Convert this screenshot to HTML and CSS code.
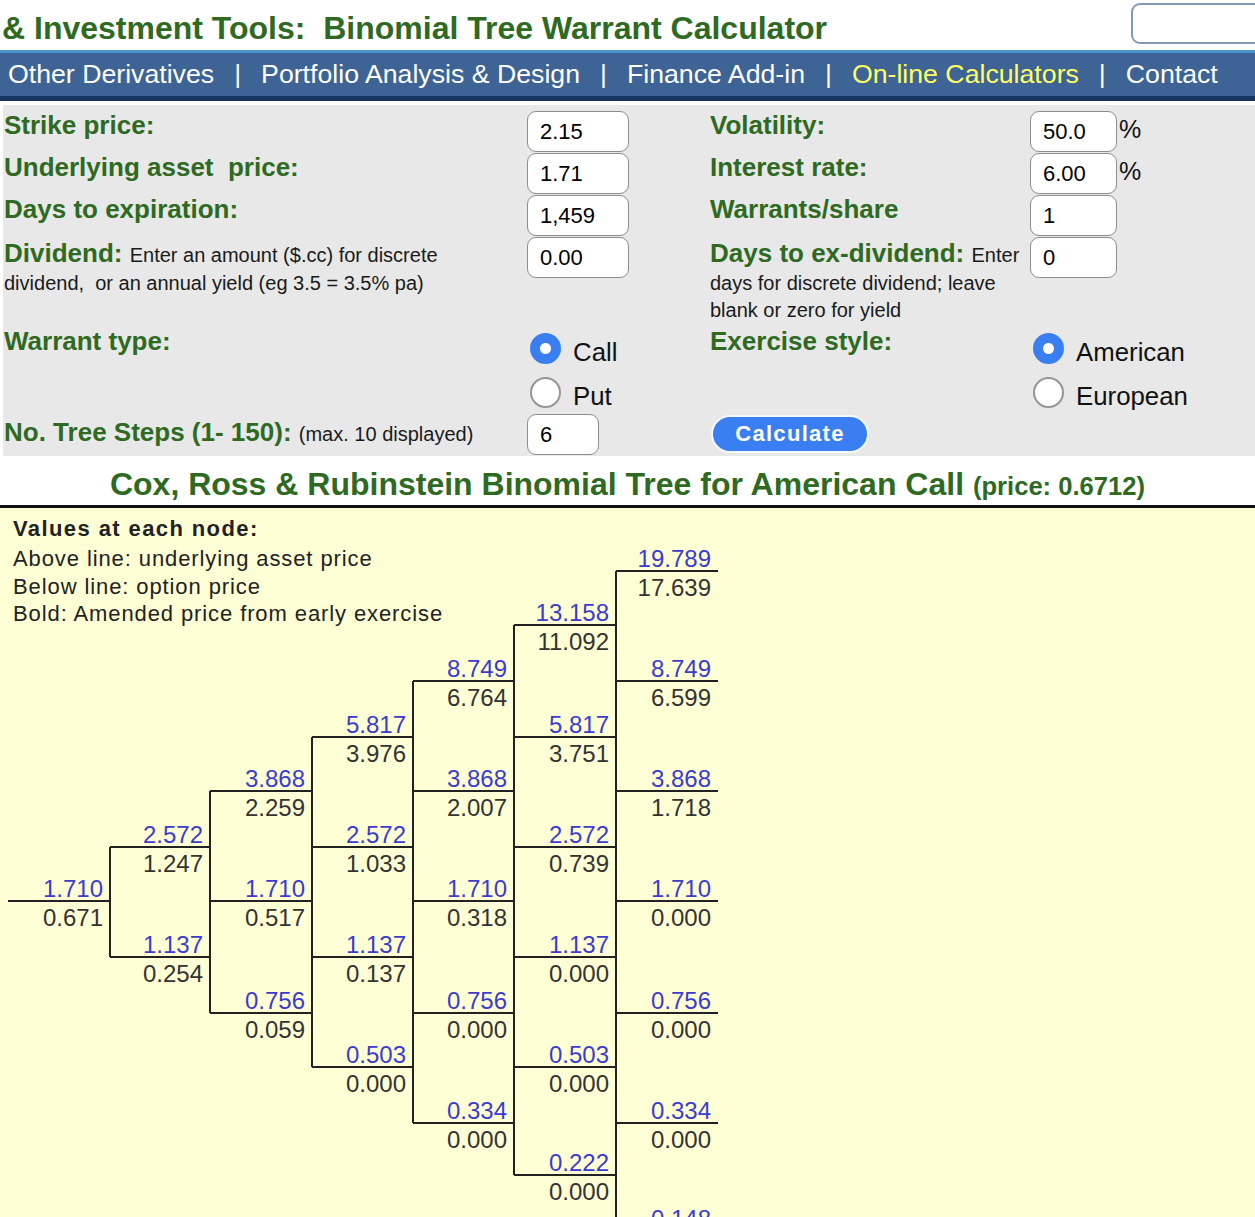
FILE: index.html
```html
<!DOCTYPE html>
<html lang="en">
<head>
  <meta charset="UTF-8" />
  <title>Binomial Tree Warrant Calculator</title>
  <link rel="stylesheet" href="styles.css">
</head>
<body>

  <header class="top">
    <h1 class="site-title">&amp; Investment Tools:&nbsp; Binomial Tree Warrant Calculator</h1>
    <input class="search" type="text">
  </header>

  <nav class="menu">
    <a href="#">Other Derivatives</a><span class="sep">|</span>
    <a href="#">Portfolio Analysis &amp; Design</a><span class="sep">|</span>
    <a href="#">Finance Add-in</a><span class="sep">|</span>
    <a href="#" class="current">On-line Calculators</a><span class="sep">|</span>
    <a href="#">Contact</a>
  </nav>

  <form class="calc">
    <div class="lbl low">Strike price:</div>
    <div><input class="box" type="text" value="2.15"></div>
    <div class="lbl low">Volatility:</div>
    <div class="pct"><input class="box small" type="text" value="50.0"><span>%</span></div>

    <div class="lbl low">Underlying asset&nbsp; price:</div>
    <div><input class="box" type="text" value="1.71"></div>
    <div class="lbl low">Interest rate:</div>
    <div class="pct"><input class="box small" type="text" value="6.00"><span>%</span></div>

    <div class="lbl low">Days to expiration:</div>
    <div><input class="box" type="text" value="1,459"></div>
    <div class="lbl low">Warrants/share</div>
    <div><input class="box small" type="text" value="1"></div>

    <div>
      <div class="lbl lower">Dividend: <span class="note">Enter an amount ($.cc) for discrete</span></div>
      <div class="note more">dividend,&nbsp; or an annual yield (eg 3.5 = 3.5% pa)</div>
    </div>
    <div><input class="box" type="text" value="0.00"></div>
    <div>
      <div class="lbl lower">Days to ex-dividend: <span class="note">Enter</span></div>
      <div class="note more">days for discrete dividend; leave<br>blank or zero for yield</div>
    </div>
    <div><input class="box small" type="text" value="0"></div>

    <div class="lbl">Warrant type:</div>
    <div class="choices">
      <label class="opt"><input type="radio" name="wtype" checked><span>Call</span></label>
      <label class="opt"><input type="radio" name="wtype"><span>Put</span></label>
    </div>
    <div class="lbl">Exercise style:</div>
    <div class="choices">
      <label class="opt"><input type="radio" name="style" checked><span>American</span></label>
      <label class="opt"><input type="radio" name="style"><span>European</span></label>
    </div>

    <div class="lbl steps">No. Tree Steps (1- 150): <span class="note">(max. 10 displayed)</span></div>
    <div><input class="box tiny" type="text" value="6"></div>
    <div><button type="button" class="go">Calculate</button></div>
    <div></div>
  </form>

  <h2 class="tree-title">Cox, Ross &amp; Rubinstein Binomial Tree for American Call <small>(price: 0.6712)</small></h2>

  <section class="tree">
    <div class="legend">
      <b>Values at each node:</b>
      <div>Above line: underlying asset price</div>
      <div>Below line: option price</div>
      <div>Bold: Amended price from early exercise</div>
    </div>

    <svg class="tree-svg" width="1255" height="711" viewBox="0 0 1255 711">
      <g class="edges">
        <!-- step 0 -->
        <line x1="8" y1="395" x2="110" y2="395"/>
        <!-- step 1 -->
        <line x1="110" y1="341" x2="110" y2="451"/>
        <line x1="110" y1="341" x2="210" y2="341"/>
        <line x1="110" y1="451" x2="210" y2="451"/>
        <!-- step 2 -->
        <line x1="210" y1="285" x2="210" y2="507"/>
        <line x1="210" y1="285" x2="312" y2="285"/>
        <line x1="210" y1="395" x2="312" y2="395"/>
        <line x1="210" y1="507" x2="312" y2="507"/>
        <!-- step 3 -->
        <line x1="312" y1="231" x2="312" y2="561"/>
        <line x1="312" y1="231" x2="413" y2="231"/>
        <line x1="312" y1="341" x2="413" y2="341"/>
        <line x1="312" y1="451" x2="413" y2="451"/>
        <line x1="312" y1="561" x2="413" y2="561"/>
        <!-- step 4 -->
        <line x1="413" y1="175" x2="413" y2="617"/>
        <line x1="413" y1="175" x2="514" y2="175"/>
        <line x1="413" y1="285" x2="514" y2="285"/>
        <line x1="413" y1="395" x2="514" y2="395"/>
        <line x1="413" y1="507" x2="514" y2="507"/>
        <line x1="413" y1="617" x2="514" y2="617"/>
        <!-- step 5 -->
        <line x1="514" y1="119" x2="514" y2="669"/>
        <line x1="514" y1="119" x2="616" y2="119"/>
        <line x1="514" y1="231" x2="616" y2="231"/>
        <line x1="514" y1="341" x2="616" y2="341"/>
        <line x1="514" y1="451" x2="616" y2="451"/>
        <line x1="514" y1="561" x2="616" y2="561"/>
        <line x1="514" y1="669" x2="616" y2="669"/>
        <!-- step 6 -->
        <line x1="616" y1="65" x2="616" y2="725"/>
        <line x1="616" y1="65" x2="718" y2="65"/>
        <line x1="616" y1="175" x2="718" y2="175"/>
        <line x1="616" y1="285" x2="718" y2="285"/>
        <line x1="616" y1="395" x2="718" y2="395"/>
        <line x1="616" y1="507" x2="718" y2="507"/>
        <line x1="616" y1="617" x2="718" y2="617"/>
        <line x1="616" y1="725" x2="718" y2="725"/>
      </g>
      <g class="asset">
        <text x="103" y="391">1.710</text>
        <text x="203" y="337">2.572</text>
        <text x="203" y="447">1.137</text>
        <text x="305" y="281">3.868</text>
        <text x="305" y="391">1.710</text>
        <text x="305" y="503">0.756</text>
        <text x="406" y="227">5.817</text>
        <text x="406" y="337">2.572</text>
        <text x="406" y="447">1.137</text>
        <text x="406" y="557">0.503</text>
        <text x="507" y="171">8.749</text>
        <text x="507" y="281">3.868</text>
        <text x="507" y="391">1.710</text>
        <text x="507" y="503">0.756</text>
        <text x="507" y="613">0.334</text>
        <text x="609" y="115">13.158</text>
        <text x="609" y="227">5.817</text>
        <text x="609" y="337">2.572</text>
        <text x="609" y="447">1.137</text>
        <text x="609" y="557">0.503</text>
        <text x="609" y="665">0.222</text>
        <text x="711" y="61">19.789</text>
        <text x="711" y="171">8.749</text>
        <text x="711" y="281">3.868</text>
        <text x="711" y="391">1.710</text>
        <text x="711" y="503">0.756</text>
        <text x="711" y="613">0.334</text>
        <text x="711" y="721">0.148</text>
      </g>
      <g class="option">
        <text x="103" y="420">0.671</text>
        <text x="203" y="366">1.247</text>
        <text x="203" y="476">0.254</text>
        <text x="305" y="310">2.259</text>
        <text x="305" y="420">0.517</text>
        <text x="305" y="532">0.059</text>
        <text x="406" y="256">3.976</text>
        <text x="406" y="366">1.033</text>
        <text x="406" y="476">0.137</text>
        <text x="406" y="586">0.000</text>
        <text x="507" y="200">6.764</text>
        <text x="507" y="310">2.007</text>
        <text x="507" y="420">0.318</text>
        <text x="507" y="532">0.000</text>
        <text x="507" y="642">0.000</text>
        <text x="609" y="144">11.092</text>
        <text x="609" y="256">3.751</text>
        <text x="609" y="366">0.739</text>
        <text x="609" y="476">0.000</text>
        <text x="609" y="586">0.000</text>
        <text x="609" y="694">0.000</text>
        <text x="711" y="90">17.639</text>
        <text x="711" y="200">6.599</text>
        <text x="711" y="310">1.718</text>
        <text x="711" y="420">0.000</text>
        <text x="711" y="532">0.000</text>
        <text x="711" y="642">0.000</text>
      </g>
    </svg>
  </section>

</body>
</html>
```

FILE: styles.css
```css
:root {
  --groen: #2e6a1f;
  --nav-blaa: #3e6395;
  --graa: #e8e8e8;
  --gul: #ffffd6;
}

body {
  margin: 0;
  font-family: "Liberation Sans", Arial, sans-serif;
  color: #111;
  background: #fff;
  overflow-x: hidden;
}

/* top */
.top {
  display: flex;
  align-items: flex-start;
  height: 50px;
}

.site-title {
  margin: 0;
  padding: 11px 0 0 2px;
  font-size: 32px;
  line-height: 34px;
  font-weight: bold;
  color: var(--groen);
  white-space: nowrap;
}

.search {
  flex-shrink: 0;
  margin: 3px -26px 0 auto;
  width: 150px;
  height: 41px;
  box-sizing: border-box;
  border: 2px solid #8499b6;
  border-radius: 9px;
  background: #fff;
}

.menu {
  display: flex;
  align-items: center;
  height: 43px;
  padding-left: 8px;
  background: var(--nav-blaa);
  border-top: 3px solid #4b92cf;
  border-bottom: 5px solid #17365f;
  font-size: 26.7px;
  white-space: nowrap;
}

.menu a {
  color: #fff;
  text-decoration: none;
}

.menu a.current {
  color: #ffff66;
}

.menu .sep {
  color: #fff;
  padding: 0 20px;
}

/* formular */
.calc {
  display: grid;
  grid-template-columns: 523px 183px 320px 1fr;
  grid-template-rows: 42px 42px 42px 92px 85px 42px;
  margin: 4px 0 0 3px;
  padding: 6px 0 0 1px;
  background: var(--graa);
}

.lbl {
  font-size: 26px;
  line-height: 24px;
  font-weight: bold;
  color: var(--groen);
}

.lbl.low {
  margin-top: 2px;
}

.lbl.lower {
  margin-top: 4px;
}

.note {
  font-size: 20px;
  line-height: 27px;
  font-weight: normal;
  color: #1a1a1a;
}

.more {
  margin-top: 1px;
}

.lbl.steps {
  margin-top: 6px;
}

.box {
  width: 102px;
  height: 41px;
  box-sizing: border-box;
  padding: 0 12px;
  border: 1.5px solid #8d8d8d;
  border-radius: 9px;
  background: #fff;
  font-family: inherit;
  font-size: 22px;
  color: #000;
}

.box.small {
  width: 87px;
}

.box.tiny {
  width: 72px;
}

.pct {
  display: flex;
  align-items: flex-start;
}

.pct span {
  margin: 4px 0 0 2px;
  font-size: 25px;
}

.choices {
  display: flex;
  flex-direction: column;
  gap: 9px;
  padding: 4px 0 0 3px;
}

.opt {
  display: flex;
  align-items: flex-start;
  gap: 12px;
  font-size: 25.8px;
  line-height: 31px;
}

.opt span {
  margin-top: 4px;
}

.opt input {
  appearance: none;
  margin: 0;
  width: 31px;
  height: 31px;
  box-sizing: border-box;
  border: 2.5px solid #959595;
  border-radius: 50%;
  background: #fff;
}

.opt input:checked {
  border-color: #3a7ff2;
  background: radial-gradient(circle, #fff 5px, #3a7ff2 6px);
}

.go {
  margin: 1px 0 0 1px;
  width: 158px;
  height: 38px;
  border: 2px solid #f4f8ff;
  border-radius: 19px;
  background: #3a7ff2;
  color: #fff;
  font-family: inherit;
  font-size: 22px;
  font-weight: bold;
  letter-spacing: 1.3px;
}

/* trae */
.tree-title {
  margin: 0;
  padding: 10px 0 1px;
  text-align: center;
  font-size: 32px;
  line-height: 36px;
  color: var(--groen);
  border-bottom: 3px solid #111;
  white-space: nowrap;
}

.tree-title small {
  font-size: 25.6px;
}

.tree {
  position: relative;
  height: 711px;
  background: var(--gul);
  color: #222;
}

.legend {
  padding: 7px 0 0 13px;
  font-size: 22px;
  line-height: 27.5px;
  letter-spacing: 0.9px;
}

.legend b {
  display: block;
  margin-bottom: 2px;
  line-height: 28px;
  letter-spacing: 1.4px;
}

.tree-svg {
  position: absolute;
  top: -2px;
  left: 0;
}

.tree-svg .edges line {
  stroke: #222;
  stroke-width: 2;
}

.tree-svg text {
  font-family: "Liberation Sans", Arial, sans-serif;
  font-size: 24px;
  text-anchor: end;
}

.tree-svg .asset text {
  fill: #3b3bd2;
}

.tree-svg .option text {
  fill: #333;
}
```
